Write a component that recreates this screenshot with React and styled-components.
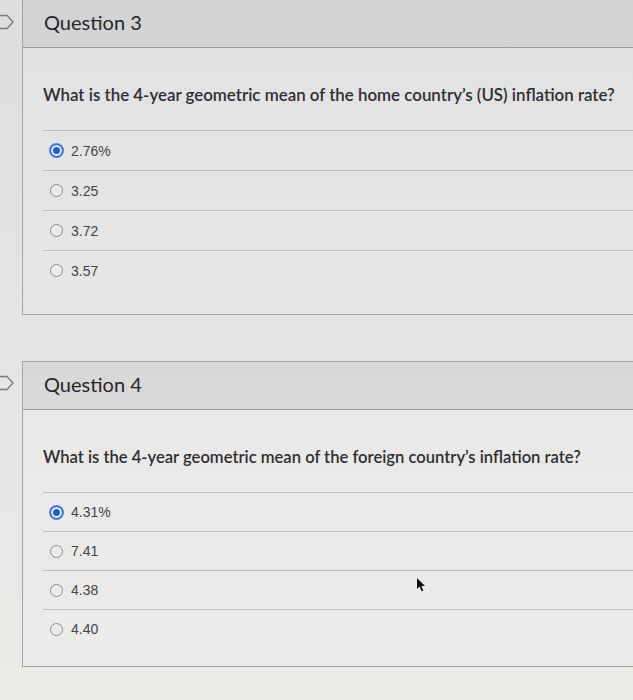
import React from 'react';
import styled, { createGlobalStyle } from 'styled-components';

const GlobalStyle = createGlobalStyle`
    html, body {
        margin: 0;
        padding: 0;
    }
    body {
        background: #e3e3e2;
    }
`;

const Page = styled.div`
    width: 633px;
    height: 700px;
    overflow: hidden;
    position: relative;
    background: linear-gradient(180deg, #dedee0 0%, #e4e4e4 45%, #ebeae7 100%);
    display: flex;
    flex-direction: column;
    gap: 46px;
`;

const Block = styled.div`
    display: flex;
    align-items: flex-start;
    margin-top: ${p => p.$first ? '-1px' : '0'};
`;

const Gutter = styled.div`
    width: 22px;
    flex-shrink: 0;
    padding-top: ${p => p.$flagTop}px;
`;

const Card = styled.div`
    flex: 1;
    margin-right: -12px;
    border: 1px solid #a3a3a5;
    border-right: none;
`;

const Header = styled.div`
    height: 48px;
    box-sizing: border-box;
    display: flex;
    align-items: center;
    padding: 0 0 4px 21px;
    background: rgba(120, 120, 130, 0.1);
    border-bottom: 1px solid #9c9c9e;
`;

const Title = styled.h2`
    margin: 0;
    font-family: Lato, "Noto Sans", sans-serif;
    font-size: 20px;
    font-weight: 400;
    color: #262628;
`;

const Body = styled.div`
    padding: 35px 0 ${p => p.$bottom}px 20px;
    background: rgba(255, 255, 255, 0.12);
`;

const Prompt = styled.p`
    margin: 0 0 23px 0;
    font-family: Lato, "Noto Sans", sans-serif;
    font-size: ${p => p.$size}px;
    line-height: 24px;
    font-weight: 600;
    color: #2e2e30;
`;

const Answers = styled.div`
    display: flex;
    flex-direction: column;
`;

const Answer = styled.label`
    height: ${p => p.$height}px;
    display: flex;
    align-items: center;
    gap: 8px;
    padding-left: 7px;
    border-top: 1px solid #bdbdbd;
    font-family: "Liberation Sans", Arial, sans-serif;
    font-size: 14px;
    color: #444446;
`;

const Radio = styled.span`
    width: 13px;
    height: 13px;
    box-sizing: border-box;
    border-radius: 50%;
    flex-shrink: 0;
    border: 1px solid ${p => p.$checked ? '#2a6bd6' : '#8a8a8c'};
    background: ${p => p.$checked ? '#1f5fd0' : '#ececec'};
    box-shadow: ${p => p.$checked ? 'inset 0 0 0 2px #f2f2f2, 0 0 0 1px #4f88e0' : 'none'};
`;

const Cursor = styled.svg`
    position: absolute;
    left: 416px;
    top: 577px;
`;

const Flag = () => (
    <svg width="22" height="16" viewBox="0 0 22 16">
        <path d="M-8 1.5 H7 L13 8 L7 14.5 H-8" fill="none" stroke="#7a7a7c" strokeWidth="1.4" strokeLinejoin="round" />
    </svg>
);

const questions = [
    {
        title: 'Question 3',
        prompt: 'What is the 4-year geometric mean of the home country\u2019s (US) inflation rate?',
        answers: ['2.76%', '3.25', '3.72', '3.57'],
        picked: 0,
        promptSize: 16.9,
        rowHeight: 39,
        bottom: 24,
        flagTop: 15,
    },
    {
        title: 'Question 4',
        prompt: 'What is the 4-year geometric mean of the foreign country\u2019s inflation rate?',
        answers: ['4.31%', '7.41', '4.38', '4.40'],
        picked: 0,
        promptSize: 16.6,
        rowHeight: 38,
        bottom: 18,
        flagTop: 14,
    },
];

const App = () => {
  return (
    <Page>
        <GlobalStyle />
        {questions.map((q, i) => (
            <Block key={q.title} $first={i === 0}>
                <Gutter $flagTop={q.flagTop}>
                    <Flag />
                </Gutter>
                <Card>
                    <Header>
                        <Title>{q.title}</Title>
                    </Header>
                    <Body $bottom={q.bottom}>
                        <Prompt $size={q.promptSize}>{q.prompt}</Prompt>
                        <Answers>
                            {q.answers.map((a, j) => (
                                <Answer key={a} $height={q.rowHeight}>
                                    <Radio $checked={j === q.picked} />
                                    {a}
                                </Answer>
                            ))}
                        </Answers>
                    </Body>
                </Card>
            </Block>
        ))}
        <Cursor width="11" height="16" viewBox="0 0 11 16">
            <path d="M1 1 L1 12 L3.6 9.6 L5.6 14.2 L7.3 13.4 L5.4 9 L9 9 Z" fill="#111" />
        </Cursor>
    </Page>
  )
}

export default App;
